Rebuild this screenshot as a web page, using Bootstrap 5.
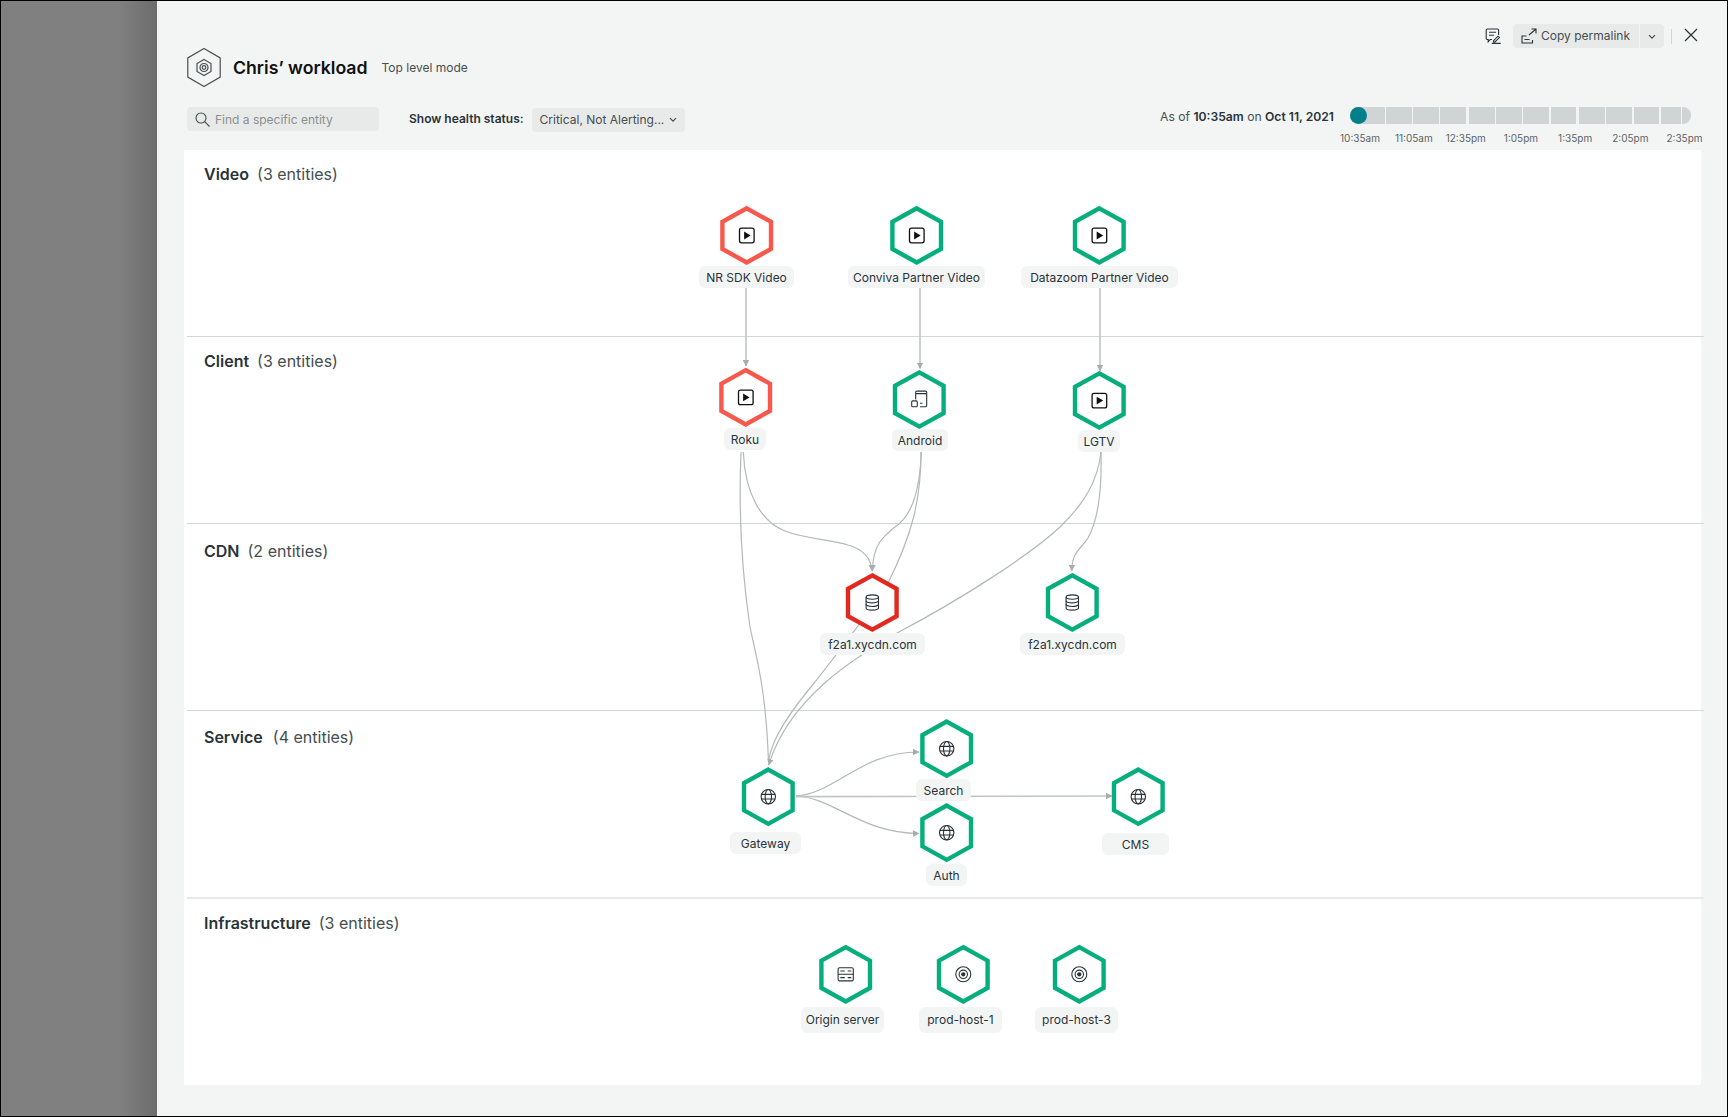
<!DOCTYPE html>
<html lang="en">
<head>
  <meta charset="UTF-8" />
  <meta name="viewport" content="width=device-width, initial-scale=1" />
  <title>Chris' workload</title>
  <link rel="stylesheet" href="https://cdn.jsdelivr.net/npm/bootstrap@5.3.3/dist/css/bootstrap.min.css">
  <style>
    body {
      font-family: Inter, "Liberation Sans", sans-serif;
      color: #293338;
      background: #000;
      height: 1117px;
      overflow: hidden;
    }
    .frame { height: 1117px; padding: 1px; }
    .backdrop {
      flex: 0 0 156px;
      background: linear-gradient(to right, #808080 0, #808080 118px, #6c6c6c 156px);
    }
    .panel { flex: 1 1 auto; min-width: 0; background: #f3f5f5; }

    /* header */
    .top-actions { height: 47px; padding: 23px 29px 0 0; }
    .icon-btn { background: none; border: 0; padding: 0; line-height: 0; }
    .perma-group { height: 24px; margin-left: 12px; }
    .perma-group .btn {
      font-size: 12px; line-height: 24px; padding: 0; border: 0; border-radius: 4px;
      background: #e8eaea; color: #464e4e;
    }
    .perma-main { width: 126px; gap: 4px; padding-left: 8px !important; }
    .perma-caret { width: 24px; margin-left: 1px !important; }
    .v-rule { width: 1px; height: 15px; background: #d0d4d4; margin: 0 12px 0 7px; }

    .title-row { height: 39px; padding-left: 30px; gap: 12px; }
    .wl-title { font-size: 17.7px; font-weight: 600; color: #111; margin: 0; line-height: 1; }
    .wl-mode { font-size: 12px; color: #464e4e; margin-left: 2px; }

    .toolbar { height: 63px; padding: 20px 26px 0 30px; }
    .find-box { width: 192px; height: 24px; background: #e8eaea; border-radius: 4px; padding-left: 8px; gap: 5px; }
    .find-box input {
      border: 0; background: none; outline: 0; padding: 0; width: 160px;
      font: 12px Inter, sans-serif; color: #293338;
    }
    .find-box input::placeholder { color: #8a9090; opacity: 1; }
    .health-label { font-size: 12px; font-weight: 600; margin: 0 8px 0 30px; }
    .health-select {
      width: 153px; height: 24px; padding: 0 0 0 8px; border: 0; border-radius: 4px; gap: 5px;
      background: #e8eaea; color: #464e4e; font-size: 12px; line-height: 24px; margin-top: 1px;
    }
    .as-of { font-size: 12.15px; color: #464e4e; margin: 1px 6px 0 0; line-height: 18px; }
    .as-of b { font-weight: 600; color: #293338; }
    .tl-wrap { width: 361px; }
    .tl-bar { position: relative; width: 341px; height: 17px; margin-left: 10px; gap: 1.3px; }
    .tl-seg { flex: 0 0 25.8px; background: #d0d4d4; }
    .tl-seg:first-child { flex-basis: 35px; border-radius: 8px 0 0 8px; }
    .tl-seg:nth-child(4), .tl-seg:nth-child(8) { margin-right: 1.7px; }
    .tl-seg:nth-child(12) { flex-basis: 20px; }
    .tl-seg:nth-child(13) { flex-basis: 9px; border-radius: 0 8px 8px 0; }
    .tl-dot {
      position: absolute; left: 0; top: 0; width: 17px; height: 17px;
      border-radius: 50%; background: #027f8a;
    }
    .tl-labels { font-size: 10px; color: #5c6464; margin-top: 8px; line-height: 13px; white-space: nowrap; }
    .tl-labels span { flex: 0 0 auto; }
    .tl-labels span:nth-child(2) { margin-left: 15px; }
    .tl-labels span:nth-child(3) { margin-left: 13px; }
    .tl-labels span:nth-child(4) { margin-left: 18px; }
    .tl-labels span:nth-child(5) { margin-left: 20px; }
    .tl-labels span:nth-child(6) { margin-left: 20px; }
    .tl-labels span:nth-child(7) { margin-left: 18px; }

    /* white sheet with the five tiers */
    .sheet { position: relative; margin: 0 26px 0 27px; height: 935px; background: #fff; }
    .tier { height: 187px; margin: 0 -3px 0 3px; border-bottom: 1px solid #d2d5d5; padding: 14px 0 0 17px; }
    .tier-cdn { padding-top: 17px; }
    .tier-service { padding-top: 16px; border-bottom-color: #e8eaea; }
    .tier-infra { border-bottom: 0; border-top: 1px solid #e8eaea; }
    .tier-name { font-size: 16px; line-height: 20px; margin: 0; font-weight: 600; color: #293338; }
    .tier-name span { font-weight: 400; color: #464e4e; margin-left: 4px; }
    .tier-service .tier-name span { margin-left: 6px; }

    /* diagram */
    .graph { position: absolute; left: 0; top: 0; }
    .edge { fill: none; stroke: #b4b8b8; stroke-width: 1.2; }
    .edge-v { stroke: #c2c5c5; stroke-width: 1.6; }
    .hx { fill: #fff; stroke-width: 4.4; stroke-linejoin: miter; }
    .hx-ok { stroke: #05ae7c; }
    .hx-warn { stroke: #f8574c; }
    .hx-crit { stroke: #e3291f; }
    .glyph { fill: none; stroke: #293338; stroke-width: 1.1; }
    .node-tag {
      position: absolute; height: 22px; line-height: 23px; text-align: center; white-space: nowrap;
      font-size: 12px; color: #293338; background: #f3f5f5; border-radius: 6px;
    }
    .tag-tall { height: 26px; line-height: 26px; }
    .t-nrsdk { left: 515px; top: 116px; width: 95px; }
    .t-conviva { left: 664px; top: 116px; width: 137px; }
    .t-datazoom { left: 837px; top: 116px; width: 157px; }
    .t-roku { left: 540px; top: 278px; width: 42px; }
    .t-android { left: 708px; top: 279px; width: 56px; }
    .t-lgtv { left: 894px; top: 280px; width: 42px; }
    .t-cdn1 { left: 636px; top: 483px; width: 105px; }
    .t-cdn2 { left: 836px; top: 483px; width: 105px; }
    .t-search { left: 732px; top: 629px; width: 55px; }
    .t-gateway { left: 546px; top: 682px; width: 71px; }
    .t-auth { left: 742px; top: 714px; width: 41px; }
    .t-cms { left: 918px; top: 683px; width: 67px; }
    .t-origin { left: 617px; top: 857px; width: 83px; }
    .t-host1 { left: 735px; top: 857px; width: 83px; }
    .t-host3 { left: 851px; top: 857px; width: 83px; }
  </style>
</head>
<body>
  <div class="frame d-flex">
    <div class="backdrop"></div>
    <div class="panel">

      <div class="top-actions d-flex justify-content-end align-items-start">
        <button class="icon-btn mt-1" type="button" aria-label="Feedback">
          <svg width="16" height="16" viewBox="0 0 16 16" fill="none" stroke="#293338" stroke-width="1.1">
            <path d="M7 11.5H5.2L3.2 13.8V11.5H2.4a1.2 1.2 0 0 1-1.2-1.2V2.2A1.2 1.2 0 0 1 2.4 1h10a1.2 1.2 0 0 1 1.2 1.2V7"/>
            <path d="M4 4.3h7M4 7.3h5"/>
            <path d="M8.6 12.6l4.4-4.4 1.4 1.4-4.4 4.4H8.6zM6.8 15.4h8.9"/>
          </svg>
        </button>
        <div class="btn-group perma-group">
          <button class="btn perma-main d-flex align-items-center" type="button">
            <svg width="16" height="16" viewBox="0 0 16 16" fill="none" stroke="#293338" stroke-width="1.1">
              <path d="M5.5 8H1v7h10.5v-3"/>
              <path d="M3.5 11.5H8.5M8 7L15 1M10.5 1H15V5.5"/>
            </svg>
            Copy permalink
          </button>
          <button class="btn perma-caret" type="button" aria-label="More">
            <svg width="8" height="6" viewBox="0 0 8 6" fill="none" stroke="#464e4e" stroke-width="1.2"><path d="M1 1.2l3 3 3-3"/></svg>
          </button>
        </div>
        <div class="v-rule align-self-center"></div>
        <button class="icon-btn" type="button" aria-label="Close">
          <svg class="mt-1" width="14" height="14" viewBox="0 0 14 14" stroke="#293338" stroke-width="1.2"><path d="M1 1l12 12M13 1L1 13"/></svg>
        </button>
      </div>

      <div class="title-row d-flex align-items-center">
        <svg width="34" height="39" viewBox="-17 -19.5 34 39" fill="none" stroke="#4a4f4f" stroke-width="1.2">
          <path d="M0-19L16.2-9.6V9.6L0 19-16.2 9.6V-9.6z"/>
          <path d="M0-8L7-4V4L0 8-7 4V-4z"/>
          <circle r="4"/>
          <circle r="1.8"/>
        </svg>
        <h1 class="wl-title">Chris’ workload</h1>
        <span class="wl-mode">Top level mode</span>
      </div>

      <div class="toolbar d-flex align-items-start">
        <div class="find-box d-flex align-items-center">
          <svg width="15" height="15" viewBox="0 0 15 15" fill="none" stroke="#464e4e" stroke-width="1.1"><circle cx="6" cy="6" r="5"/><path d="M9.7 9.7L14.5 14.5"/></svg>
          <input type="text" placeholder="Find a specific entity" aria-label="Find a specific entity" />
        </div>
        <label class="health-label lh-lg">Show health status:</label>
        <button class="btn health-select d-flex align-items-center" type="button">
          Critical, Not Alerting...
          <svg width="8" height="6" viewBox="0 0 8 6" fill="none" stroke="#464e4e" stroke-width="1.2"><path d="M1 1.2l3 3 3-3"/></svg>
        </button>
        <div class="ms-auto d-flex align-items-start">
          <div class="as-of">As of <b>10:35am</b> on <b>Oct 11, 2021</b></div>
          <div class="tl-wrap">
            <div class="tl-bar d-flex">
              <div class="tl-seg"></div><div class="tl-seg"></div><div class="tl-seg"></div><div class="tl-seg"></div>
              <div class="tl-seg"></div><div class="tl-seg"></div><div class="tl-seg"></div><div class="tl-seg"></div>
              <div class="tl-seg"></div><div class="tl-seg"></div><div class="tl-seg"></div><div class="tl-seg"></div>
              <div class="tl-seg"></div>
              <div class="tl-dot"></div>
            </div>
            <div class="tl-labels d-flex">
              <span>10:35am</span><span>11:05am</span><span>12:35pm</span><span>1:05pm</span><span>1:35pm</span><span>2:05pm</span><span>2:35pm</span>
            </div>
          </div>
        </div>
      </div>

      <div class="sheet">
        <section class="tier"><h2 class="tier-name">Video <span>(3 entities)</span></h2></section>
        <section class="tier"><h2 class="tier-name">Client <span>(3 entities)</span></h2></section>
        <section class="tier tier-cdn"><h2 class="tier-name">CDN <span>(2 entities)</span></h2></section>
        <section class="tier tier-service"><h2 class="tier-name">Service <span>(4 entities)</span></h2></section>
        <section class="tier tier-infra"><h2 class="tier-name">Infrastructure <span>(3 entities)</span></h2></section>

        <!-- coordinates in the svg are page coordinates, see viewBox -->
        <svg class="graph" width="1517" height="935" viewBox="184 150 1517 935">
          <defs>
            <marker id="tip" markerUnits="userSpaceOnUse" markerWidth="7" markerHeight="7" refX="6" refY="3.5" orient="auto">
              <path d="M0 0.3L6.5 3.5L0 6.7z" fill="#a8acac"/>
            </marker>
            <polygon id="hex" points="0,-27.1 24.3,-13.6 24.3,13.6 0,27.1 -24.3,13.6 -24.3,-13.6"/>
            <g id="i-play">
              <rect x="-7.2" y="-7.2" width="14.6" height="14.6" rx="2" fill="none" stroke="#111" stroke-width="1.3"/>
              <path d="M-2.6-3.8L3.9 0.1L-2.6 4z" fill="#111"/>
            </g>
            <g id="i-device" class="glyph">
              <path d="M-3.6 0V-7.2a1.2 1.2 0 0 1 1.2-1.2H6.2a1.2 1.2 0 0 1 1.2 1.2V6a1.2 1.2 0 0 1-1.2 1.2H0.7"/>
              <path d="M-3.6-5.9H7.4M0.7 3.8H3.2"/>
              <rect x="-7.6" y="1.4" width="5.6" height="5.8" rx="1"/>
            </g>
            <g id="i-db" class="glyph">
              <ellipse cx="0" cy="-5.4" rx="6.2" ry="2.2"/>
              <path d="M-6.2-5.4V5.4C-6.2 6.7-3.4 7.6 0 7.6S6.2 6.7 6.2 5.4V-5.4"/>
              <path d="M-6.2-1.8C-6.2-.5-3.4.4 0 .4S6.2-.5 6.2-1.8M-6.2 1.8C-6.2 3.1-3.4 4 0 4S6.2 3.1 6.2 1.8"/>
            </g>
            <g id="i-globe" class="glyph">
              <circle r="7.2"/>
              <ellipse rx="3.2" ry="7.2"/>
              <path d="M-6.7-2.3H6.7M-6.7 2.3H6.7"/>
            </g>
            <g id="i-target" class="glyph" stroke-width="1">
              <circle r="7.5"/>
              <circle r="4.2"/>
              <circle r="1.6" fill="#293338"/>
            </g>
            <g id="i-server" class="glyph">
              <rect x="-7.6" y="-6.6" width="15.2" height="13.2" rx="1.4"/>
              <path d="M-7.6 0H7.6M-5.4-3.3H-1M2-3.3H5.6M-5.4 3.3H-1M2 3.3H5.6"/>
            </g>
          </defs>

          <path class="edge edge-v" marker-end="url(#tip)" d="M746 288V366"/>
          <path class="edge edge-v" marker-end="url(#tip)" d="M920 288V368.5"/>
          <path class="edge edge-v" marker-end="url(#tip)" d="M1100 288V371"/>

          <path class="edge" d="M741 452C739 500 740 560 750 627C757 660 766 690 768.5 761"/>
          <path class="edge" marker-end="url(#tip)" d="M743.3 452C745 495 762 522 785 531C805 539 830 539 848 545C862 549 871 557 872.2 571"/>
          <path class="edge" marker-end="url(#tip)" d="M921.3 452C920 490 912 512 900 523C885 535 873 542 872.4 571"/>
          <path class="edge" d="M921 452C921 500 912 535 888 583C875 605 840 650 815 682C790 712 772 738 768.5 761"/>
          <path class="edge" marker-end="url(#tip)" d="M1101 452C1098 480 1085 503 1060 527C1030 555 960 600 897 633C860 655 790 695 768.7 765"/>
          <path class="edge" marker-end="url(#tip)" d="M1101 452C1102 490 1098 520 1088 538C1080 550 1072 552 1071.8 571"/>

          <path class="edge" marker-end="url(#tip)" d="M796 796C835 794 860 752 919 752"/>
          <path class="edge" marker-end="url(#tip)" d="M796 796C835 798 860 833 919 833.5"/>
          <path class="edge edge-v" marker-end="url(#tip)" d="M796 796.6L1112 796"/>

          <g transform="translate(746.7 235.4)"><use href="#hex" class="hx hx-warn"/><use href="#i-play"/></g>
          <g transform="translate(916.7 235.4)"><use href="#hex" class="hx hx-ok"/><use href="#i-play"/></g>
          <g transform="translate(1099.3 235.4)"><use href="#hex" class="hx hx-ok"/><use href="#i-play"/></g>

          <g transform="translate(745.7 397.3)"><use href="#hex" class="hx hx-warn"/><use href="#i-play"/></g>
          <g transform="translate(919.3 399.5)"><use href="#hex" class="hx hx-ok"/><use href="#i-device"/></g>
          <g transform="translate(1099.3 400.5)"><use href="#hex" class="hx hx-ok"/><use href="#i-play"/></g>

          <g transform="translate(872.3 602.5)"><use href="#hex" class="hx hx-crit"/><use href="#i-db"/></g>
          <g transform="translate(1072.3 602.5)"><use href="#hex" class="hx hx-ok"/><use href="#i-db"/></g>

          <g transform="translate(946.7 748.7)"><use href="#hex" class="hx hx-ok"/><use href="#i-globe"/></g>
          <g transform="translate(768.3 796.7)"><use href="#hex" class="hx hx-ok"/><use href="#i-globe"/></g>
          <g transform="translate(946.7 832.7)"><use href="#hex" class="hx hx-ok"/><use href="#i-globe"/></g>
          <g transform="translate(1138.3 796.7)"><use href="#hex" class="hx hx-ok"/><use href="#i-globe"/></g>

          <g transform="translate(845.7 974.3)"><use href="#hex" class="hx hx-ok"/><use href="#i-server"/></g>
          <g transform="translate(963.3 974.3)"><use href="#hex" class="hx hx-ok"/><use href="#i-target"/></g>
          <g transform="translate(1079.3 974.3)"><use href="#hex" class="hx hx-ok"/><use href="#i-target"/></g>
        </svg>

        <div class="node-tag t-nrsdk">NR SDK Video</div>
        <div class="node-tag t-conviva">Conviva Partner Video</div>
        <div class="node-tag t-datazoom">Datazoom Partner Video</div>
        <div class="node-tag t-roku">Roku</div>
        <div class="node-tag t-android">Android</div>
        <div class="node-tag t-lgtv">LGTV</div>
        <div class="node-tag t-cdn1">f2a1.xycdn.com</div>
        <div class="node-tag t-cdn2">f2a1.xycdn.com</div>
        <div class="node-tag t-search">Search</div>
        <div class="node-tag t-gateway">Gateway</div>
        <div class="node-tag t-auth">Auth</div>
        <div class="node-tag t-cms">CMS</div>
        <div class="node-tag tag-tall t-origin">Origin server</div>
        <div class="node-tag tag-tall t-host1">prod-host-1</div>
        <div class="node-tag tag-tall t-host3">prod-host-3</div>
      </div>

    </div>
  </div>
  <script src="https://cdn.jsdelivr.net/npm/bootstrap@5.3.3/dist/js/bootstrap.bundle.min.js"></script>
</body>
</html>
